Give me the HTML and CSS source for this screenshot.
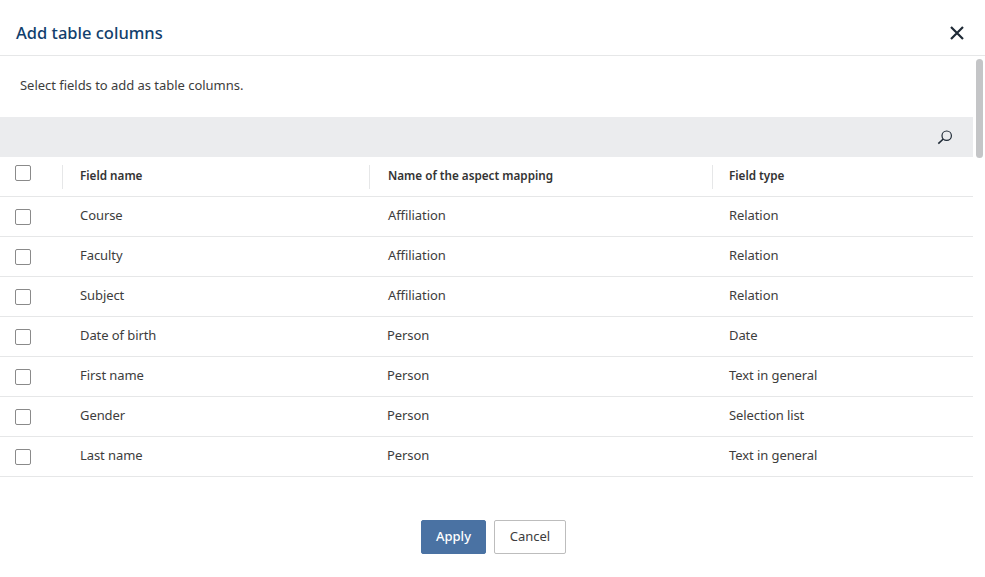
FILE: index.html
```html
<!DOCTYPE html>
<html lang="en">
<head>
<meta charset="utf-8">
<title>Add table columns</title>
<link rel="stylesheet" href="styles.css">
</head>
<body>
<div class="dialog">
  <header class="head">
    <h1 class="title">Add table columns</h1>
    <button class="close" aria-label="Close">
      <svg width="16" height="16" viewBox="0 0 16 16"><path d="M2 2 L14 14 M14 2 L2 14" stroke="#1f2a36" stroke-width="2.2" fill="none"/></svg>
    </button>
  </header>
  <div class="body">
    <div class="content">
      <p class="intro">Select fields to add as table columns.</p>
      <div class="toolbar">
        <svg width="16" height="16" viewBox="0 0 16 16"><circle cx="9.7" cy="6.7" r="4.7" stroke="#1f2a36" stroke-width="1.2" fill="none"/><path d="M6.3 10 L1.3 14.6" stroke="#1f2a36" stroke-width="1.6" fill="none"/></svg>
      </div>
      <div class="row row-head">
        <div class="check"><span class="box"></span></div>
        <div class="cell th sep">Field name</div>
        <div class="cell th sep">Name of the aspect mapping</div>
        <div class="cell th sep">Field type</div>
      </div>
      <div class="row"><div class="check"><span class="box"></span></div><div class="cell">Course</div><div class="cell">Affiliation</div><div class="cell">Relation</div></div>
      <div class="row"><div class="check"><span class="box"></span></div><div class="cell">Faculty</div><div class="cell">Affiliation</div><div class="cell">Relation</div></div>
      <div class="row"><div class="check"><span class="box"></span></div><div class="cell">Subject</div><div class="cell">Affiliation</div><div class="cell">Relation</div></div>
      <div class="row alt"><div class="check"><span class="box"></span></div><div class="cell">Date of birth</div><div class="cell">Person</div><div class="cell">Date</div></div>
      <div class="row alt"><div class="check"><span class="box"></span></div><div class="cell">First name</div><div class="cell">Person</div><div class="cell">Text in general</div></div>
      <div class="row alt"><div class="check"><span class="box"></span></div><div class="cell">Gender</div><div class="cell">Person</div><div class="cell">Selection list</div></div>
      <div class="row alt"><div class="check"><span class="box"></span></div><div class="cell">Last name</div><div class="cell">Person</div><div class="cell">Text in general</div></div>
    </div>
    <div class="track"><div class="thumb"></div></div>
  </div>
  <footer class="foot">
    <button class="btn primary">Apply</button>
    <button class="btn">Cancel</button>
  </footer>
</div>
</body>
</html>
```

FILE: styles.css
```css
* { box-sizing: border-box; }
html, body { margin: 0; height: 100%; }
body {
  background: #fff;
  font-family: "Noto Sans", "Open Sans", sans-serif;
  font-size: 13px;
  letter-spacing: -0.08px;
  color: #3d3d3d;
  overflow: hidden;
}
.dialog { width: 985px; height: 577px; display: flex; flex-direction: column; }
.head {
  height: 56px;
  flex: none;
  border-bottom: 1px solid #e6e7e8;
  display: flex;
  align-items: center;
  justify-content: space-between;
  padding: 10px 20px 0 16px;
}
.title { margin: 0; font-size: 16.5px; font-weight: 500; color: #123f6d; letter-spacing: 0; }
.close { border: 0; background: none; padding: 0; width: 16px; height: 16px; display: flex; }
.body { flex: none; height: 421px; display: flex; overflow: hidden; }
.content { width: 973px; flex: none; }
.intro { margin: 0; height: 61px; padding: 20px 0 0 20px; line-height: 19px; letter-spacing: -0.03px; }
.toolbar {
  height: 40px;
  background: #ebecee;
  display: flex;
  align-items: center;
  justify-content: flex-end;
  padding-right: 20px;
}
.row {
  display: grid;
  grid-template-columns: 62px 308px 341px 262px;
  height: 40px;
  border-bottom: 1px solid #e6e7e8;
  align-items: center;
}
.row.alt { grid-template-columns: 62px 307px 342px 262px; }
.row.row-head { grid-template-columns: 62px 307px 343px 261px; }
.check { padding-left: 15px; display: flex; }
.box {
  width: 16px;
  height: 16px;
  border: 1px solid #8a8a8a;
  border-radius: 2px;
  background: #fff;
  display: block;
  margin-top: 1px;
}
.row-head .box { margin-top: -7px; }
.cell { padding: 0 0 3px 18px; white-space: nowrap; }
.th { font-weight: 600; font-size: 11.7px; color: #333; letter-spacing: 0; }
.sep { border-left: 1px solid #e6e7e8; height: 24px; line-height: 20px; padding: 0 0 0 17px; }
.sep + .sep { padding-left: 18px; }
.sep + .sep + .sep { padding-left: 16px; }
.track { flex: 1; padding: 3px 2px 0 3px; }
.thumb { height: 99px; width: 7px; background: #c4c5c7; border-radius: 4px; }
.foot { flex: 1; display: flex; justify-content: center; gap: 8px; padding-top: 43px; padding-left: 2px; }
.btn {
  height: 34px;
  width: 72px;
  font: inherit;
  font-size: 13px;
  line-height: 30px;
  color: #3d3d3d;
  background: #fff;
  border: 1px solid #bdbdbd;
  border-radius: 2px;
  padding: 0 0 2px;
}
.primary { width: 65px; background: #4a72a3; border-color: #4a72a3; color: #fff; font-weight: 500; }
```
